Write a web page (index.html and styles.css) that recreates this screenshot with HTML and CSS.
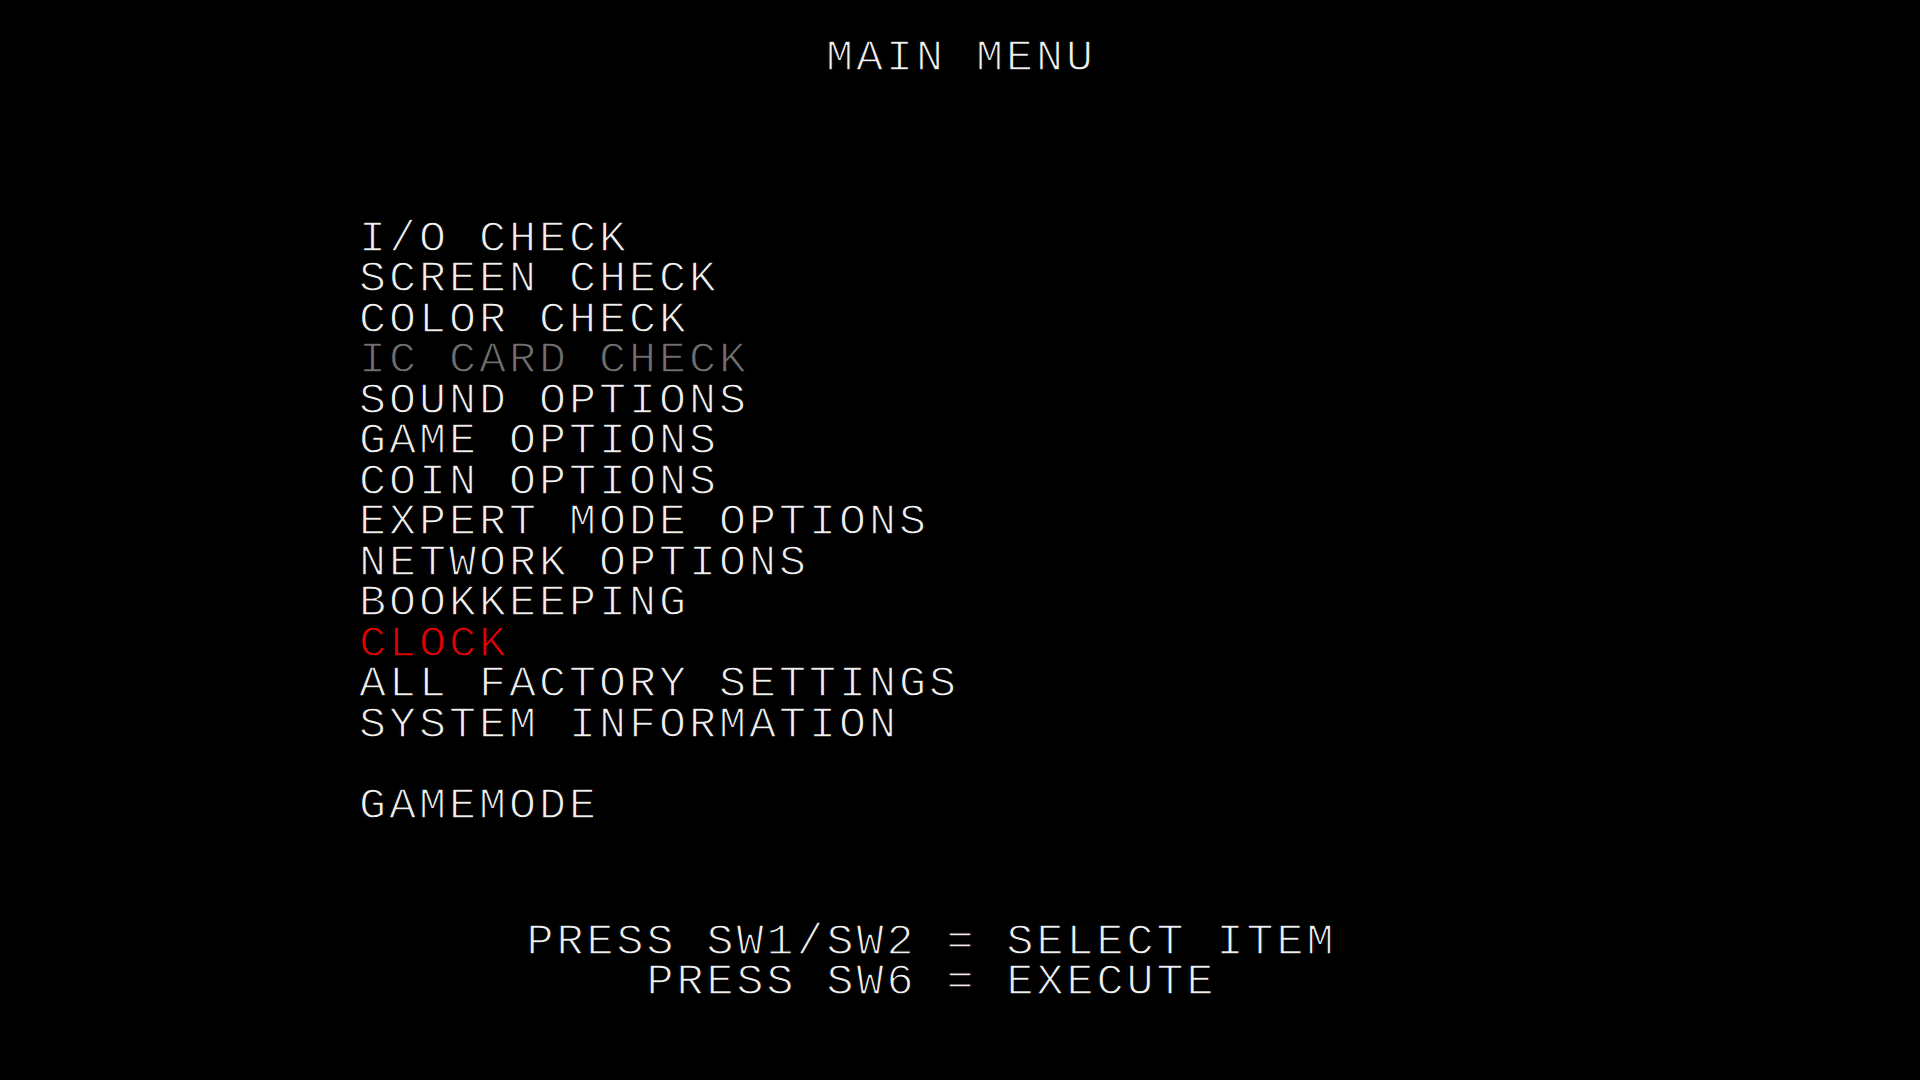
FILE: index.html
```html
<!DOCTYPE html>
<html lang="en">
<head>
<meta charset="utf-8">
<title>MAIN MENU</title>
<link rel="stylesheet" href="styles.css">
</head>
<body>
<div class="screen">
  <h1 class="title">MAIN MENU</h1>
  <ul class="menu">
    <li class="item">I/O CHECK</li>
    <li class="item">SCREEN CHECK</li>
    <li class="item">COLOR CHECK</li>
    <li class="item disabled">IC CARD CHECK</li>
    <li class="item">SOUND OPTIONS</li>
    <li class="item">GAME OPTIONS</li>
    <li class="item">COIN OPTIONS</li>
    <li class="item">EXPERT MODE OPTIONS</li>
    <li class="item">NETWORK OPTIONS</li>
    <li class="item">BOOKKEEPING</li>
    <li class="item selected">CLOCK</li>
    <li class="item">ALL FACTORY SETTINGS</li>
    <li class="item">SYSTEM INFORMATION</li>
    <li class="item gap">GAMEMODE</li>
  </ul>
  <div class="help">
    <p class="help-line">PRESS SW1/SW2 = SELECT ITEM</p>
    <p class="help-line">PRESS SW6 = EXECUTE</p>
  </div>
</div>
</body>
</html>
```
FILE: styles.css
```css
html, body {
  margin: 0;
  padding: 0;
  background: #000;
}

.screen {
  width: 1920px;
  height: 1080px;
  overflow: hidden;
  background: #000;
  color: #f0f0f0;
  font-family: "Liberation Mono", "DejaVu Sans Mono", monospace;
  font-size: 45px;
  line-height: 40.5px;
  letter-spacing: 3px;
  -webkit-text-stroke: 1.3px #000;
}

.title {
  margin: 0;
  padding-top: 39px;
  padding-left: 2px;
  font-size: 45px;
  font-weight: normal;
  text-align: center;
  line-height: 40.5px;
}

.menu {
  list-style: none;
  margin: 140px 0 0 0;
  padding: 0 0 0 359px;
}

.item {
  height: 40.5px;
  white-space: pre;
}

.item.disabled {
  color: #707070;
}

.item.selected {
  color: #e80000;
}

.item.gap {
  margin-top: 40.5px;
}

.help {
  margin-top: 95.5px;
  padding-right: 57px;
  text-align: center;
}

.help-line {
  margin: 0;
  white-space: pre;
}
```
